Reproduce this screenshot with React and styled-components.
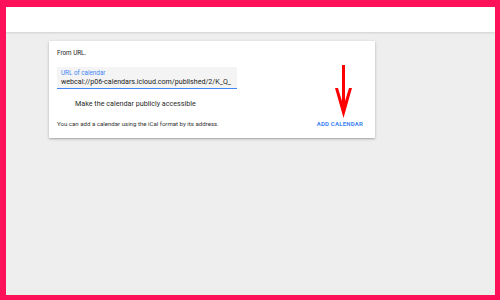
import React from "react";
import styled, { createGlobalStyle } from "styled-components";

const GlobalStyle = createGlobalStyle`
  html, body {
    margin: 0;
    padding: 0;
  }
  body {
    font-family: Roboto, "Liberation Sans", Arial, sans-serif;
  }
`;

const Frame = styled.div`
  position: relative;
  box-sizing: border-box;
  width: 500px;
  height: 300px;
  border-style: solid;
  border-color: #ff1159;
  border-width: 7px 5px 5px 6px;
  background: #eeeeee;
  display: flex;
  flex-direction: column;
  overflow: hidden;
`;

const Header = styled.div`
  height: 25px;
  flex-shrink: 0;
  background: #ffffff;
  box-shadow: 0 1px 2px rgba(0, 0, 0, 0.12);
  position: relative;
  z-index: 1;
`;

const Main = styled.div`
  flex: 1;
  padding: 9px 0 0 43px;
`;

const Card = styled.div`
  position: relative;
  box-sizing: border-box;
  width: 326px;
  height: 97px;
  background: #ffffff;
  box-shadow: 0 1px 3px rgba(0, 0, 0, 0.22), 0 1px 1px rgba(0, 0, 0, 0.1);
  padding: 8px 12px 0 8px;
  display: flex;
  flex-direction: column;
`;

const Title = styled.div`
  font-size: 6.3px;
  line-height: 9px;
  color: #212121;
`;

const Field = styled.div`
  box-sizing: border-box;
  margin-top: 9px;
  width: 180px;
  height: 22px;
  background: #f4f4f4;
  border-bottom: 1.5px solid #4285f4;
  padding: 3px 3px 0 4px;
  display: flex;
  flex-direction: column;
`;

const FieldLabel = styled.div`
  font-size: 6.3px;
  line-height: 7px;
  color: #4285f4;
`;

const FieldValue = styled.div`
  font-size: 7.1px;
  line-height: 10px;
  color: #222222;
  white-space: nowrap;
`;

const CheckRow = styled.div`
  margin: 9px 0 0 18px;
  font-size: 7.2px;
  line-height: 11px;
  color: #2a2a2a;
`;

const Footer = styled.div`
  margin-top: 10px;
  display: flex;
  justify-content: space-between;
  align-items: center;
`;

const Hint = styled.div`
  font-size: 6.1px;
  line-height: 9px;
  color: #333333;
`;

const Action = styled.div`
  font-size: 6px;
  line-height: 9px;
  font-weight: bold;
  letter-spacing: 0.2px;
  color: #4285f4;
`;

const Arrow = styled.svg`
  position: absolute;
  left: 286px;
  top: 24px;
`;

const App = () => {
  return (
    <>
      <GlobalStyle />
      <Frame>
        <Header />
        <Main>
          <Card>
            <Title>From URL.</Title>
            <Field>
              <FieldLabel>URL of calendar</FieldLabel>
              <FieldValue>webcal://p06-calendars.icloud.com/published/2/K_Q_</FieldValue>
            </Field>
            <CheckRow>Make the calendar publicly accessible</CheckRow>
            <Footer>
              <Hint>You can add a calendar using the iCal format by its address.</Hint>
              <Action>ADD CALENDAR</Action>
            </Footer>
            <Arrow width="18" height="54" viewBox="0 0 18 54">
              <rect x="7" y="0" width="3" height="46" fill="#ff0000" />
              <path d="M0 23 L3 23 L8.5 41 L14 23 L17 23 L8.5 53 Z" fill="#ff0000" />
            </Arrow>
          </Card>
        </Main>
      </Frame>
    </>
  );
};

export default App;
